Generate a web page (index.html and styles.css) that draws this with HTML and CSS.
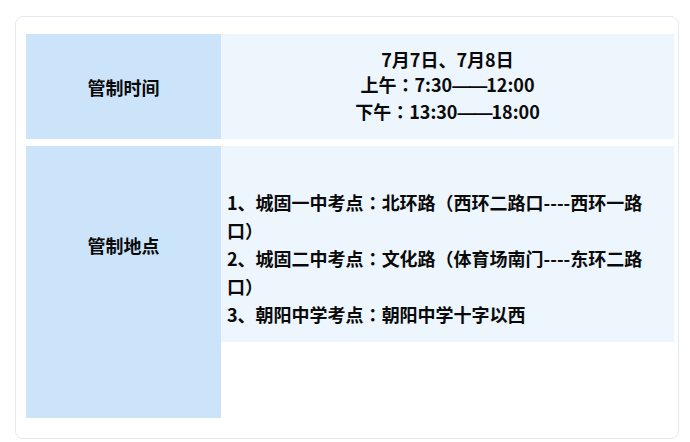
FILE: index.html
```html
<!DOCTYPE html>
<html lang="zh-CN">
<head>
<meta charset="utf-8">
<title>管制时间与地点</title>
<link rel="stylesheet" href="styles.css">
</head>
<body>
<div class="card">
  <div class="row row-time">
    <div class="label">管制时间</div>
    <div class="value value-time">
      <div>7月7日、7月8日</div>
      <div>上午<span class="colon" lang="zh-TW">：</span>7:30<span class="dash">——</span>12:00</div>
      <div>下午<span class="colon" lang="zh-TW">：</span>13:30<span class="dash">——</span>18:00</div>
    </div>
  </div>
  <div class="row row-place">
    <div class="label label-place">管制地点</div>
    <div class="value value-place">
      <div>1、城固一中考点<span class="colon" lang="zh-TW">：</span>北环路（西环二路口----西环一路<br>口）</div>
      <div>2、城固二中考点<span class="colon" lang="zh-TW">：</span>文化路（体育场南门----东环二路<br>口）</div>
      <div>3、朝阳中学考点<span class="colon" lang="zh-TW">：</span>朝阳中学十字以西</div>
    </div>
  </div>
</div>
</body>
</html>
```

FILE: styles.css
```css
html, body {
  margin: 0;
  padding: 0;
  background: #ffffff;
}

body {
  font-family: "Noto Sans CJK SC", "Noto Sans", sans-serif;
  font-weight: 700;
  font-size: 18px;
  color: #0a0a0a;
}

.card {
  box-sizing: border-box;
  width: 664px;
  height: 423px;
  margin: 16px 0 0 15px;
  border: 1px solid #e4eaf2;
  border-radius: 8px;
  padding: 17px 4px 0 10px;
  display: flex;
  flex-direction: column;
  gap: 7px;
}

.row {
  display: flex;
}

.label {
  width: 195px;
  flex: none;
  background: #cce4fa;
  display: flex;
  justify-content: center;
  align-items: center;
  line-height: 28px;
}

.value {
  flex: 1;
  background: #edf5fd;
}

.colon {
  font-family: "Noto Sans CJK TC", "Noto Sans CJK SC", sans-serif;
}

.dash {
  font-family: "Liberation Sans", "DejaVu Sans", sans-serif;
  font-weight: 700;
  letter-spacing: -1px;
}

.row-time {
  height: 105px;
}

.value-time {
  display: flex;
  flex-direction: column;
  justify-content: center;
  align-items: center;
  line-height: 25px;
}

.row-place {
  height: 272px;
  align-items: flex-start;
}

.label-place {
  height: 100%;
  align-items: flex-start;
  box-sizing: border-box;
  padding-top: 85px;
}

.value-place {
  box-sizing: border-box;
  height: 196px;
  padding: 42px 10px 0 6px;
  line-height: 28px;
  white-space: nowrap;
}
```
